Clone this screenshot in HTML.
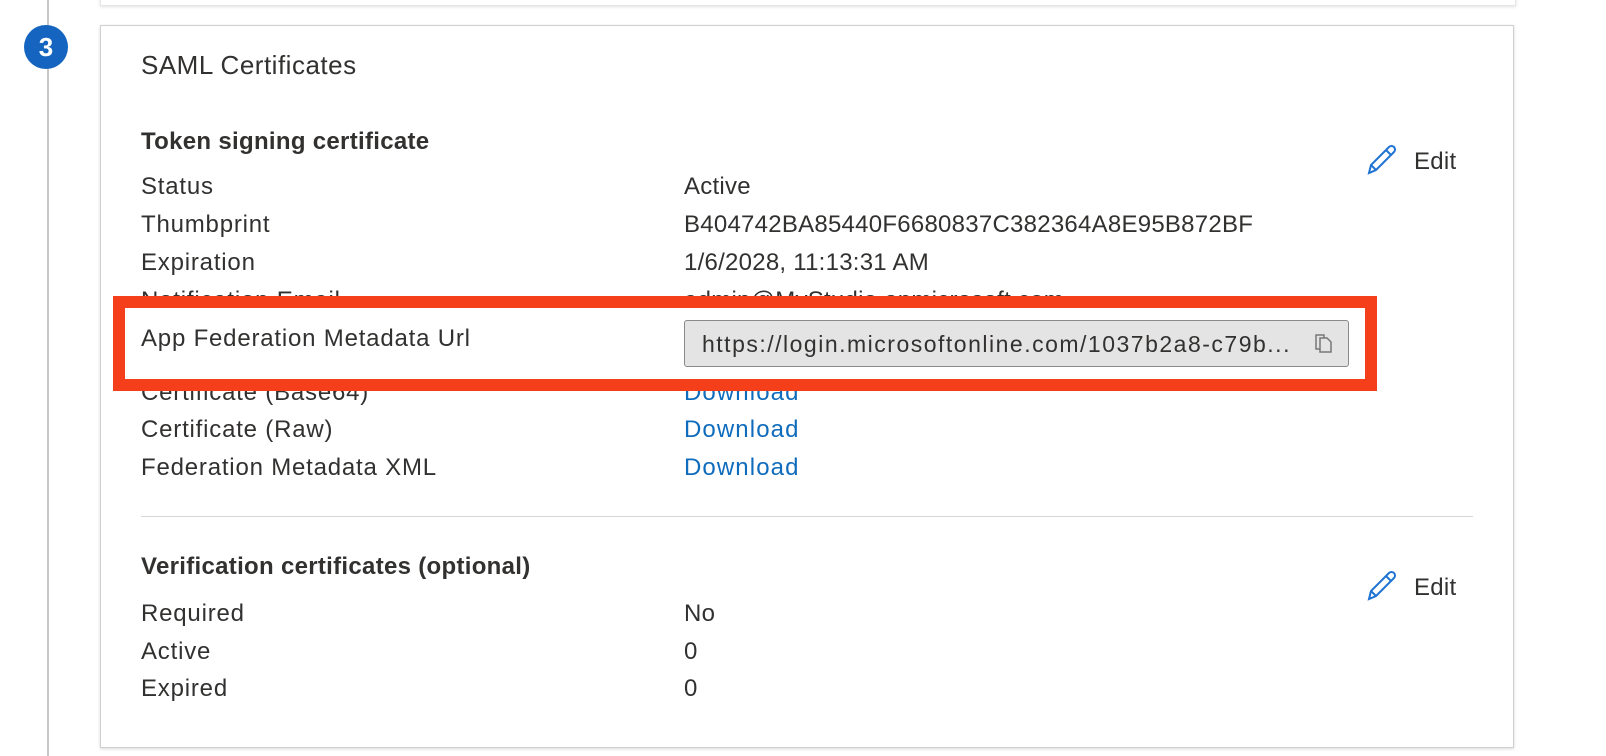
<!DOCTYPE html>
<html><head><style>
body{margin:0;width:1606px;height:756px;background:#fff;position:relative;overflow:hidden;font-family:"Liberation Sans",sans-serif;color:#323130}
.a{position:absolute;white-space:nowrap;font-size:24px;line-height:30px;letter-spacing:0.8px}
.v{letter-spacing:0.25px}
.b{font-weight:bold;letter-spacing:0.3px}
.l{color:#0f6cbd;letter-spacing:1.1px}
</style></head><body>
<div style="position:absolute;left:100px;top:-10px;width:1414px;height:14px;border:1px solid #e6e6e6;box-shadow:0 1px 3px rgba(0,0,0,.12)"></div>
<div style="position:absolute;left:47px;top:0;width:2px;height:756px;background:#c8c8c8"></div>
<div style="position:absolute;left:24px;top:25px;width:44px;height:44px;border-radius:50%;background:#1565c0;color:#fff;font-weight:bold;font-size:26px;line-height:44px;text-align:center">3</div>
<div style="position:absolute;left:100px;top:25px;width:1412px;height:721px;border:1px solid #d0d0d0;box-shadow:0 1px 3px rgba(0,0,0,.15);background:#fff"></div>
<div class="a" style="left:141px;top:50px;font-size:26px;letter-spacing:0.5px">SAML Certificates</div>
<div class="a b" style="left:141px;top:127px">Token signing certificate</div>
<div class="a" style="left:141px;top:172px">Status</div><div class="a v" style="left:684px;top:172px">Active</div>
<div class="a" style="left:141px;top:210px">Thumbprint</div><div class="a v" style="left:684px;top:210px">B404742BA85440F6680837C382364A8E95B872BF</div>
<div class="a" style="left:141px;top:248px">Expiration</div><div class="a v" style="left:684px;top:248px">1/6/2028, 11:13:31 AM</div>
<div class="a" style="left:141px;top:286px">Notification Email</div><div class="a v" style="left:684px;top:286px">admin@MyStudio.onmicrosoft.com</div>
<div class="a" style="left:141px;top:378px">Certificate (Base64)</div><div class="a l" style="left:684px;top:378px">Download</div>
<div class="a" style="left:141px;top:415px">Certificate (Raw)</div><div class="a l" style="left:684px;top:415px">Download</div>
<div class="a" style="left:141px;top:453px">Federation Metadata XML</div><div class="a l" style="left:684px;top:453px">Download</div>
<div style="position:absolute;left:113px;top:296px;width:1240px;height:71px;border:12px solid #f43f1a;background:#fff"></div>
<div class="a" style="left:141px;top:324px">App Federation Metadata Url</div>
<div style="position:absolute;left:684px;top:320px;width:663px;height:45px;border:1px solid #8a8a8a;border-radius:3px;background:#e4e4e4"></div>
<div class="a" style="left:702px;top:329px;font-size:23px;letter-spacing:1.5px">https://login.microsoftonline.com/1037b2a8-c79b...</div>
<svg style="position:absolute;left:1313px;top:332px" width="22" height="22" viewBox="0 0 22 22" fill="none" stroke="#777" stroke-width="1.5"><path d="M3 3h8v14H3z"/><path d="M7 6h7l4 4v10H7z" fill="#e4e4e4"/></svg>
<div style="position:absolute;left:141px;top:516px;width:1332px;height:1px;background:#d6d6d6"></div>
<div class="a b" style="left:141px;top:552px">Verification certificates (optional)</div>
<div class="a" style="left:141px;top:599px">Required</div><div class="a v" style="left:684px;top:599px">No</div>
<div class="a" style="left:141px;top:637px">Active</div><div class="a v" style="left:684px;top:637px">0</div>
<div class="a" style="left:141px;top:674px">Expired</div><div class="a v" style="left:684px;top:674px">0</div>
<svg style="position:absolute;left:1365px;top:143px" width="34" height="34" viewBox="0 0 34 34" fill="none" stroke="#1f73d2" stroke-width="2"><path d="M4 30l2-8L24 4a3 3 0 0 1 5 5L11 27z M21 7l5 5 M6 22l5 5"/></svg>
<div class="a v" style="left:1414px;top:147px">Edit</div>
<svg style="position:absolute;left:1365px;top:569px" width="34" height="34" viewBox="0 0 34 34" fill="none" stroke="#1f73d2" stroke-width="2"><path d="M4 30l2-8L24 4a3 3 0 0 1 5 5L11 27z M21 7l5 5 M6 22l5 5"/></svg>
<div class="a v" style="left:1414px;top:573px">Edit</div>
</body></html>
